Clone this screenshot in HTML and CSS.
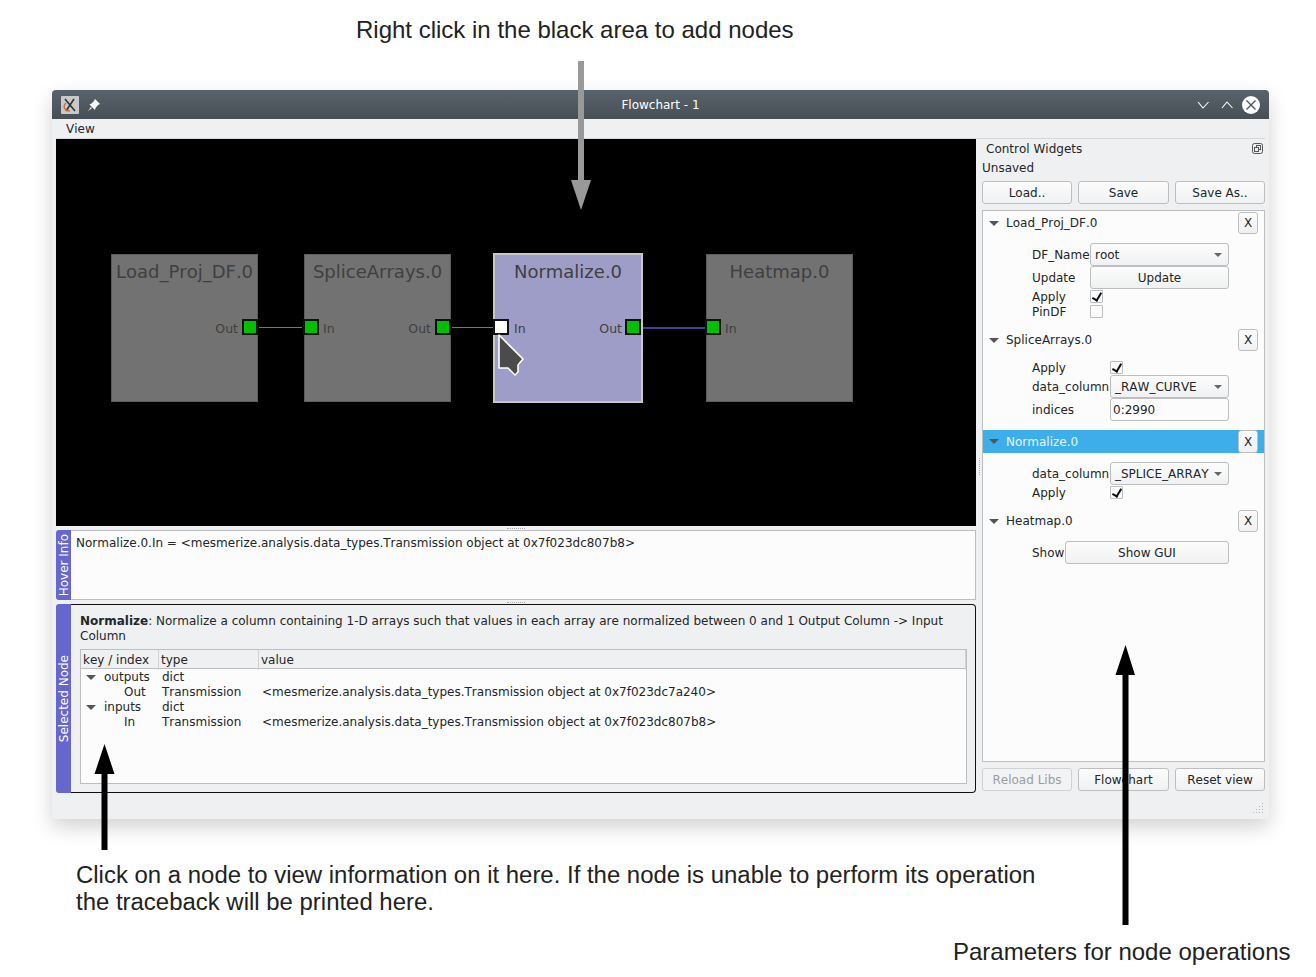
FILE: index.html
```html
<!DOCTYPE html>
<html lang="en">

<head>
    <meta charset="UTF-8">
    <title>Flowchart - 1</title>
    <link rel="stylesheet" href="styles.css">
</head>

<body>
    <div class="page">
        <p class="note note-top">Right click in the black area to add nodes</p>

        <div class="window">
            <div class="titlebar">
                <div class="title-left">
                    <svg class="app-icon" width="18" height="18" viewBox="0 0 18 18">
                        <rect width="18" height="18" rx="1" fill="#c9c9c9" />
                        <path d="M4 3 L14 15 M13 3 L5 15" stroke="#333" stroke-width="1.6" />
                        <path d="M5 7 C1 11 4 15 9 15" stroke="#d9692b" stroke-width="1.4" fill="none" />
                    </svg>
                    <svg width="14" height="14" viewBox="0 0 14 14">
                        <path d="M8 1 L13 6 L11 7 L8.500 10 L8 12 L2.500 6.500 L4.500 5.500 L7 3 Z M4 9 L1 13 L5 10 Z" fill="#fff" />
                    </svg>
                </div>
                <span class="title-text">Flowchart - 1</span>
                <div class="title-right">
                    <svg class="title-min" width="14" height="14" viewBox="0 0 14 14">
                        <path d="M2 4 L7 10 L12.500 4" stroke="#fff" fill="none" stroke-width="1.100" />
                    </svg>
                    <svg width="14" height="14" viewBox="0 0 14 14">
                        <path d="M2 10 L7 4 L12.500 10" stroke="#fff" fill="none" stroke-width="1.100" />
                    </svg>
                    <svg width="18" height="18" viewBox="0 0 18 18">
                        <circle cx="9" cy="9" r="9" fill="#fff" />
                        <path d="M4.500 4.500 L13.500 13.500 M13.500 4.500 L4.500 13.500" stroke="#4d565d" stroke-width="1.400" />
                    </svg>
                </div>
            </div>
            <div class="menubar"><span>View</span></div>

            <div class="content">
                <div class="left">
                    <div class="canvas">
                        <svg class="wires" width="920" height="387">
                            <line x1="203" y1="188.500" x2="246" y2="188.500" stroke="#6a6ad0" />
                            <line x1="396" y1="188.500" x2="438" y2="188.500" stroke="#6a6ad0" />
                            <line x1="587" y1="189" x2="649" y2="189" stroke="#40409a" stroke-width="2" />
                        </svg>

                        <div class="node node-1">
                            <div class="node-name">Load_Proj_DF.0</div>
                            <span class="term-label out">Out</span>
                            <span class="term term-right"></span>
                        </div>
                        <div class="node node-2">
                            <div class="node-name">SpliceArrays.0</div>
                            <span class="term term-left"></span>
                            <span class="term-label in">In</span>
                            <span class="term-label out">Out</span>
                            <span class="term term-right"></span>
                        </div>
                        <div class="node node-3 selected">
                            <div class="node-name">Normalize.0</div>
                            <span class="term term-left hovered"></span>
                            <span class="term-label in">In</span>
                            <span class="term-label out">Out</span>
                            <span class="term term-right"></span>
                            <svg class="cursor" width="28" height="44" viewBox="0 0 28 44">
                                <path d="M2 1 L2 34 L11 34 L18 41 L21 38 L21 31 L26 25 Z" fill="#4b4b4b" stroke="#fff" stroke-width="1.600" stroke-linejoin="round" />
                            </svg>
                        </div>
                        <div class="node node-4">
                            <div class="node-name">Heatmap.0</div>
                            <span class="term term-left"></span>
                            <span class="term-label in">In</span>
                        </div>
                    </div>

                    <div class="handle"></div>

                    <div class="dock hover-dock">
                        <div class="dock-tab"><span>Hover Info</span></div>
                        <div class="hover-text">Normalize.0.In = &lt;mesmerize.analysis.data_types.Transmission object at 0x7f023dc807b8&gt;</div>
                    </div>

                    <div class="handle"></div>

                    <div class="dock selected-dock">
                        <div class="dock-tab"><span>Selected Node</span></div>
                        <div class="selected-body">
                            <p class="description"><b>Normalize</b>: Normalize a column containing 1-D arrays such that values in each array are normalized between 0 and 1 Output Column -&gt; Input Column</p>
                            <div class="tree">
                                <div class="tree-head">
                                    <span>key / index</span>
                                    <span>type</span>
                                    <span>value</span>
                                </div>
                                <div class="tree-row">
                                    <span class="key"><i class="arrow"></i>outputs</span>
                                    <span>dict</span>
                                    <span></span>
                                </div>
                                <div class="tree-row">
                                    <span class="key child">Out</span>
                                    <span>Transmission</span>
                                    <span>&lt;mesmerize.analysis.data_types.Transmission object at 0x7f023dc7a240&gt;</span>
                                </div>
                                <div class="tree-row">
                                    <span class="key"><i class="arrow"></i>inputs</span>
                                    <span>dict</span>
                                    <span></span>
                                </div>
                                <div class="tree-row">
                                    <span class="key child">In</span>
                                    <span>Transmission</span>
                                    <span>&lt;mesmerize.analysis.data_types.Transmission object at 0x7f023dc807b8&gt;</span>
                                </div>
                            </div>
                        </div>
                    </div>
                </div>

                <div class="vhandle"></div>

                <div class="right">
                    <div class="control-title">
                        <span>Control Widgets</span>
                        <svg width="11" height="11" viewBox="0 0 11 11">
                            <rect x="0.500" y="0.500" width="10" height="10" rx="2" fill="none" stroke="#555" />
                            <rect x="4.500" y="2.500" width="4" height="4" fill="none" stroke="#555" />
                            <rect x="2.500" y="4.500" width="4" height="4" fill="#eeeff1" stroke="#555" />
                        </svg>
                    </div>
                    <div class="unsaved">Unsaved</div>
                    <div class="button-row">
                        <button class="btn">Load..</button>
                        <button class="btn">Save</button>
                        <button class="btn">Save As..</button>
                    </div>

                    <div class="params">
                        <div class="group-head">
                            <i class="arrow"></i><span>Load_Proj_DF.0</span>
                            <button class="btn btn-x">X</button>
                        </div>
                        <div class="group group-load">
                            <div class="param h23"><label>DF_Name</label><div class="combo"><span>root</span><i class="arrow"></i></div></div>
                            <div class="param h23"><label>Update</label><button class="btn">Update</button></div>
                            <div class="param h15"><label>Apply</label><span class="check on"></span></div>
                            <div class="param h15"><label>PinDF</label><span class="check"></span></div>
                        </div>

                        <div class="group-head gap-head">
                            <i class="arrow"></i><span>SpliceArrays.0</span>
                            <button class="btn btn-x">X</button>
                        </div>
                        <div class="group group-wide">
                            <div class="param h15"><label>Apply</label><span class="check on"></span></div>
                            <div class="param h23"><label>data_column</label><div class="combo"><span>_RAW_CURVE</span><i class="arrow"></i></div></div>
                            <div class="param h23"><label>indices</label><div class="line-edit">0:2990</div></div>
                        </div>

                        <div class="group-head active gap-head">
                            <i class="arrow"></i><span>Normalize.0</span>
                            <button class="btn btn-x">X</button>
                        </div>
                        <div class="group group-wide group-norm">
                            <div class="param h23"><label>data_column</label><div class="combo"><span>_SPLICE_ARRAY</span><i class="arrow"></i></div></div>
                            <div class="param h15"><label>Apply</label><span class="check on"></span></div>
                        </div>

                        <div class="group-head gap-head">
                            <i class="arrow"></i><span>Heatmap.0</span>
                            <button class="btn btn-x">X</button>
                        </div>
                        <div class="group group-show">
                            <div class="param h23"><label>Show</label><button class="btn">Show GUI</button></div>
                        </div>
                    </div>

                    <div class="button-row bottom-row">
                        <button class="btn disabled">Reload Libs</button>
                        <button class="btn">Flowchart</button>
                        <button class="btn">Reset view</button>
                    </div>
                </div>
            </div>

            <svg class="grip" width="12" height="12" viewBox="0 0 12 12">
                <path d="M10 1h1v1h-1z M10 4h1v1h-1z M7 4h1v1h-1z M10 7h1v1h-1z M7 7h1v1h-1z M4 7h1v1h-1z M10 10h1v1h-1z M7 10h1v1h-1z M4 10h1v1h-1z M1 10h1v1h-1z" fill="#b4b7ba" />
            </svg>
        </div>

        <p class="note note-left">Click on a node to view information on it here. If the node is unable to perform its operation the traceback will be printed here.</p>
        <p class="note note-right">Parameters for node operations</p>

        <!-- annotation arrows lie over the window -->
        <svg class="overlay" width="1316" height="977">
            <path d="M578 61 H584 V180 H591 L581 210 L571 180 H578 Z" fill="#999" />
            <path d="M101.500 850 H107.500 V774 H114.500 L104.500 744 L94.500 774 H101.500 Z" fill="#000" />
            <path d="M1122.500 925 H1128.500 V675 H1135 L1125.500 645 L1115.500 675 H1122.500 Z" fill="#000" />
        </svg>
    </div>
</body>

</html>
```

FILE: styles.css
```css
* {
    box-sizing: border-box;
    padding: 0;
    margin: 0;
}

body {
    background-color: white;
    font-family: "DejaVu Sans", sans-serif;
    font-size: 12px;
    font-kerning: none;
    color: #232629;
}

.page {
    position: relative;
    width: 1316px;
    height: 977px;
    overflow: hidden;
    padding-top: 16px;
}

.note {
    font-family: "Liberation Sans", sans-serif;
    font-size: 24px;
    font-kerning: normal;
    line-height: 27px;
    color: #222;
}

.note-top {
    margin-left: 356px;
    height: 74px;
}

.note-left {
    margin: 42px 0 0 76px;
    width: 980px;
    font-size: 23.950px;
}

.note-right {
    margin: 23px 0 0 953px;
    white-space: nowrap;
}

.overlay {
    position: absolute;
    left: 0;
    top: 0;
    pointer-events: none;
}

/* window */
.window {
    position: relative;
    width: 1217px;
    height: 729px;
    margin-left: 52px;
    background-color: #eff0f1;
    border-radius: 4px 4px 2px 2px;
    box-shadow: 0 8px 20px rgba(0, 0, 0, 0.18);
}

.titlebar {
    height: 29px;
    display: flex;
    align-items: center;
    justify-content: space-between;
    padding: 0 9px;
    background: linear-gradient(#59636b, #474f56);
    border-radius: 4px 4px 0 0;
    color: white;
}

.title-left,
.title-right {
    display: flex;
    align-items: center;
}

.title-left {
    gap: 8px;
    width: 200px;
}

.title-right {
    gap: 8px;
    width: 200px;
    justify-content: flex-end;
}

.title-min {
    margin-right: 2px;
}

.menubar {
    height: 20px;
    margin: 0 4px;
    padding: 2px 0 0 10px;
    line-height: 17px;
    border-bottom: 1px solid #d5d7d9;
}

.content {
    display: flex;
    padding: 0 4px;
}

.left {
    width: 920px;
}

.right {
    width: 283px;
}

.handle {
    height: 4px;
    display: flex;
    align-items: center;
    justify-content: center;
}

.handle::after {
    content: "";
    width: 18px;
    border-top: 1px dotted #a8aaac;
}

.vhandle {
    width: 6px;
    flex: none;
    display: flex;
    justify-content: center;
    padding-top: 319px;
}

.vhandle::after {
    content: "";
    height: 17px;
    border-left: 1px dotted #a8aaac;
}

/* node canvas */
.canvas {
    position: relative;
    height: 387px;
    background-color: black;
}

.wires {
    position: absolute;
    left: 0;
    top: 0;
}

.node {
    position: absolute;
    width: 147px;
    height: 148px;
    background-color: #727272;
    border: 1px solid #5c5c5c;
    color: #404040;
}

.node-1 {
    left: 55px;
    top: 115px;
}

.node-2 {
    left: 248px;
    top: 115px;
}

.node-3 {
    left: 437px;
    top: 114px;
    width: 150px;
    height: 150px;
}

.node-4 {
    left: 650px;
    top: 115px;
}

.node.selected {
    background-color: #9d9dc8;
    border: 2px solid #c8c8c8;
}

.node-name {
    font-size: 18px;
    line-height: 24px;
    margin-top: 5px;
    text-align: center;
}

.term {
    position: absolute;
    top: 64px;
    width: 16px;
    height: 16px;
    background-color: #00c000;
    border: 2px solid #111;
}

.term-left {
    left: -2px;
}

.term-right {
    right: -1px;
}

.selected .term-right {
    right: 0;
}

.term.hovered {
    background-color: white;
}

.term-label {
    position: absolute;
    top: 66px;
    font-size: 12.500px;
    line-height: 16px;
}

.term-label.in {
    left: 18px;
}

.selected .term-label.in {
    left: 19px;
}

.term-label.out {
    right: 19px;
}

.cursor {
    position: absolute;
    left: 2px;
    top: 79px;
}

/* docks under the canvas */
.dock {
    display: flex;
}

.dock-tab {
    width: 15px;
    flex: none;
    display: flex;
    align-items: center;
    justify-content: center;
    background-color: #6666cc;
    border-radius: 3px 0 0 3px;
    color: white;
    font-size: 12px;
}

.dock-tab span {
    writing-mode: vertical-rl;
    transform: rotate(180deg);
    white-space: nowrap;
}

.hover-dock {
    height: 70px;
}

.hover-text {
    flex: 1;
    padding: 4px 5px;
    line-height: 16px;
    background-color: #fcfcfc;
    border: 1px solid #bcbec0;
    border-left: none;
}

.selected-dock {
    height: 189px;
}

.selected-body {
    flex: 1;
    padding: 9px 8px 8px 9px;
    border: 1px solid #111;
    border-left: none;
    border-radius: 0 4px 4px 0;
}

.description {
    line-height: 15px;
    height: 35px;
}

.tree {
    height: 135px;
    background-color: #fcfcfc;
    border: 1px solid #bcbec0;
}

.tree-head,
.tree-row {
    display: grid;
    grid-template-columns: 78px 100px 1fr;
}

.tree-head {
    height: 19px;
    line-height: 20px;
    margin-bottom: 1px;
    background-color: #eff0f1;
    border-bottom: 1px solid #bcbec0;
}

.tree-head span {
    padding-left: 2px;
    border-right: 1px solid #d0d2d4;
}

.tree-row {
    height: 15px;
    line-height: 15px;
}

.tree-row span {
    padding-left: 3px;
    white-space: nowrap;
}

.tree-row .key {
    padding-left: 5px;
    display: flex;
    align-items: center;
    gap: 8px;
}

.tree-row .key.child {
    padding-left: 43px;
}

.arrow {
    display: block;
    flex: none;
    width: 0;
    height: 0;
    border-left: 5px solid transparent;
    border-right: 5px solid transparent;
    border-top: 5px solid #555;
}

/* control panel */
.control-title {
    display: flex;
    align-items: center;
    justify-content: space-between;
    height: 19px;
    padding: 0 2px 0 4px;
}

.unsaved {
    height: 23px;
    line-height: 20px;
}

.button-row {
    display: grid;
    grid-template-columns: 90px 91px 90px;
    gap: 6px;
    height: 23px;
}

.bottom-row {
    margin-top: 6px;
}

.btn {
    height: 23px;
    font-family: inherit;
    font-size: 12px;
    font-kerning: none;
    color: #232629;
    background: linear-gradient(#fcfcfc, #f0f1f2);
    border: 1px solid #bcbec0;
    border-radius: 3px;
}

.btn.disabled {
    color: #9a9c9e;
    background: #f2f3f4;
    border-color: #cfd1d3;
}

.btn-x {
    position: absolute;
    right: 6px;
    top: 1px;
    width: 20px;
    height: 22px;
}

.params {
    height: 552px;
    margin-top: 6px;
    background-color: #fcfcfc;
    border: 1px solid #bcbec0;
}

.group-head {
    position: relative;
    height: 24px;
    display: flex;
    align-items: center;
    gap: 7px;
    padding-left: 6px;
}

.group-head.active {
    height: 23px;
    background-color: #3daee9;
    color: #e6f5fd;
}

.active .btn-x {
    top: 0;
    height: 23px;
}

.gap-head {
    margin-top: 9px;
}

.group {
    --value-left: 107px;
    padding: 8px 35px 0 49px;
}

.group-wide {
    --value-left: 127px;
}

.group-show {
    --value-left: 82px;
}

.group-norm {
    padding-top: 9px;
}

.param {
    display: flex;
    align-items: center;
    white-space: nowrap;
}

.param label {
    flex: none;
    width: calc(var(--value-left) - 49px);
    overflow: hidden;
}

.h15 {
    height: 15px;
}

.h23 {
    height: 23px;
}

.param .btn,
.combo,
.line-edit {
    flex: 1;
    height: 23px;
}

.combo {
    display: flex;
    align-items: center;
    justify-content: space-between;
    padding: 0 6px 0 4px;
    background: linear-gradient(#fcfcfc, #f0f1f2);
    border: 1px solid #bcbec0;
    border-radius: 3px;
}

.combo .arrow {
    border-left-width: 4px;
    border-right-width: 4px;
    border-top-width: 4px;
    border-top-color: #666;
}

.line-edit {
    padding: 0 2px;
    line-height: 22px;
    background-color: #fcfcfc;
    border: 1px solid #bcbec0;
    border-radius: 3px;
}

.check {
    position: relative;
    width: 13px;
    height: 13px;
    background-color: #fcfcfc;
    border: 1px solid #bcbec0;
    border-radius: 1px;
}

.check.on::after {
    content: "";
    position: absolute;
    left: 3px;
    top: 0;
    width: 4px;
    height: 8px;
    border-right: 2px solid #111;
    border-bottom: 2px solid #111;
    transform: rotate(30deg);
}

.grip {
    position: absolute;
    right: 5px;
    bottom: 5px;
}
```
